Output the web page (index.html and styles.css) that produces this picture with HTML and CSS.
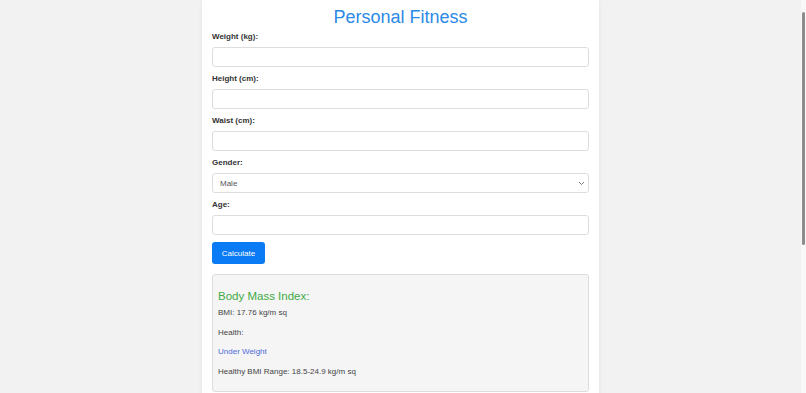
FILE: index.html
```html
<!DOCTYPE html>
<html lang="en">
<head>
<meta charset="utf-8">
<title>Personal Fitness</title>
<link rel="stylesheet" href="styles.css">
</head>
<body>
<div class="container">
  <h1 class="title">Personal Fitness</h1>
  <div class="field">
    <label class="label">Weight (kg):</label>
    <input class="input" type="text">
  </div>
  <div class="field">
    <label class="label">Height (cm):</label>
    <input class="input" type="text">
  </div>
  <div class="field">
    <label class="label">Waist (cm):</label>
    <input class="input" type="text">
  </div>
  <div class="field">
    <label class="label">Gender:</label>
    <div class="select-wrap">
      <select class="input select"><option>Male</option><option>Female</option></select>
      <svg class="chev" width="7" height="5" viewBox="0 0 7 5"><path d="M1 1 L3.5 3.5 L6 1" fill="none" stroke="#777" stroke-width="1"/></svg>
    </div>
  </div>
  <div class="field">
    <label class="label">Age:</label>
    <input class="input" type="text">
  </div>
  <button class="btn">Calculate</button>
  <div class="results">
    <h2 class="res-title">Body Mass Index:</h2>
    <p class="res-line">BMI: 17.76 kg/m sq</p>
    <p class="res-line">Health:</p>
    <p class="res-line under">Under Weight</p>
    <p class="res-line">Healthy BMI Range: 18.5-24.9 kg/m sq</p>
  </div>
</div>
<div class="scroll-track"><div class="scroll-thumb"></div></div>
</body>
</html>
```
FILE: styles.css
```css
html { overflow: hidden; }
body {
  margin: 0;
  padding-right: 5px;
  background: #f2f2f2;
  font-family: "Liberation Sans", Arial, sans-serif;
  color: #333;
}
.container {
  width: 377px;
  margin: 0 auto;
  background: #fff;
  padding: 6px 10px 10px;
  box-shadow: 0 0 4px rgba(0,0,0,0.07);
}
.title {
  margin: 0 0 4px;
  font-size: 18px;
  line-height: 22px;
  font-weight: normal;
  color: #2b8ae6;
  text-align: center;
}
.label {
  display: block;
  font-size: 8px;
  line-height: 10px;
  font-weight: bold;
  color: #333;
  margin-bottom: 5px;
}
.input {
  display: block;
  width: 100%;
  box-sizing: border-box;
  height: 20px;
  margin: 0 0 7px;
  border: 1px solid #ddd;
  border-radius: 3px;
  background: #fff;
  font-family: "Liberation Sans", Arial, sans-serif;
  font-size: 8px;
  outline: none;
}
.select-wrap { position: relative; }
.select {
  -webkit-appearance: none;
  appearance: none;
  padding: 0 7px;
  color: #555;
}
.chev {
  position: absolute;
  right: 4px;
  top: 8px;
}
.btn {
  display: block;
  height: 22px;
  width: 53px;
  padding: 0;
  border: none;
  border-radius: 3px;
  background: #0a7bf5;
  color: #fff;
  font-family: "Liberation Sans", Arial, sans-serif;
  font-size: 8px;
  margin-bottom: 10px;
}
.results {
  border: 1px solid #ddd;
  border-radius: 3px;
  background: #f5f5f5;
  padding: 14px 5px 5px;
}
.res-title {
  margin: 0 0 5px;
  font-size: 11.5px;
  line-height: 14px;
  font-weight: normal;
  color: #3faa45;
}
.res-line {
  margin: 0 0 9.5px;
  font-size: 8px;
  line-height: 10px;
  color: #444;
}
.res-line.under { color: #4d6bd8; }
.scroll-track {
  position: fixed;
  right: 0;
  top: 0;
  width: 5px;
  height: 100%;
  background: #f8f8f8;
}
.scroll-thumb {
  position: absolute;
  left: 1px;
  top: 12px;
  width: 3px;
  height: 233px;
  border-radius: 2px;
  background: #8c8c8c;
}
```
